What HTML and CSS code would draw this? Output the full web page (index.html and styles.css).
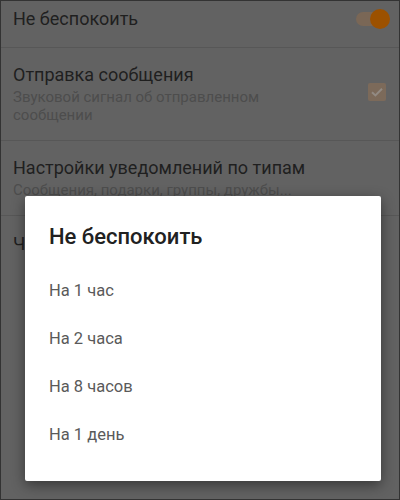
FILE: index.html
```html
<!DOCTYPE html>
<html lang="ru">
<head>
<meta charset="utf-8">
<title>Не беспокоить</title>
<link rel="stylesheet" href="styles.css">
</head>
<body>
<div class="screen">
  <div class="list">
    <div class="row row-first">
      <div class="text">
        <div class="title">Не беспокоить</div>
      </div>
      <div class="switch">
        <span class="track"></span>
        <span class="thumb"></span>
      </div>
    </div>
    <div class="row">
      <div class="text">
        <div class="title">Отправка сообщения</div>
        <div class="sub">Звуковой сигнал об отправленном сообщении</div>
      </div>
      <div class="checkbox">
        <svg width="18" height="18" viewBox="0 0 18 18"><path d="M4 9.2 L7.4 12.4 L14 5.8" fill="none" stroke="#928a83" stroke-width="2"/></svg>
      </div>
    </div>
    <div class="row">
      <div class="text">
        <div class="title">Настройки уведомлений по типам</div>
        <div class="sub">Сообщения, подарки, группы, дружбы...</div>
      </div>
    </div>
    <div class="row row-last">
      <div class="text">
        <div class="title">Частота</div>
      </div>
    </div>
  </div>

  <div class="dialog">
    <div class="dialog-title">Не беспокоить</div>
    <div class="option">На 1 час</div>
    <div class="option">На 2 часа</div>
    <div class="option">На 8 часов</div>
    <div class="option">На 1 день</div>
  </div>
</div>
</body>
</html>
```
FILE: styles.css
```css
html, body {
  margin: 0;
  padding: 0;
}
body {
  font-family: Roboto, "Noto Sans", "DejaVu Sans", sans-serif;
  background: #616161;
}
.screen {
  position: relative;
  width: 400px;
  height: 500px;
  box-sizing: border-box;
  border: 1px solid #333333;
  background: #626262;
  overflow: hidden;
}
.list {
  display: flex;
  flex-direction: column;
}
.row {
  display: flex;
  align-items: center;
  padding: 17px 13px 16px 12px;
  border-bottom: 1px solid #575757;
}
.row-first {
  padding-top: 8px;
  padding-bottom: 18px;
}
.row-last {
  border-bottom: none;
  padding-top: 18px;
}
.text {
  flex: 1;
  min-width: 0;
}
.title {
  font-size: 18px;
  line-height: 20px;
  color: #1f1f1f;
  white-space: nowrap;
}
.sub {
  margin-top: 3px;
  font-size: 15px;
  line-height: 18px;
  color: #4d4d4d;
  max-width: 280px;
}
.switch {
  position: relative;
  width: 34px;
  height: 20px;
  margin-right: -4px;
}
.track {
  position: absolute;
  left: 0;
  top: 3px;
  width: 34px;
  height: 14px;
  border-radius: 7px;
  background: #7a6756;
}
.thumb {
  position: absolute;
  right: 0;
  top: 0;
  width: 20px;
  height: 20px;
  border-radius: 50%;
  background: #9c5100;
}
.checkbox {
  width: 18px;
  height: 18px;
  border-radius: 2px;
  background: #7c6a5a;
  margin-top: -6px;
}
.checkbox svg {
  display: block;
}
.dialog {
  position: absolute;
  left: 24px;
  top: 195px;
  width: 356px;
  height: 285px;
  box-sizing: border-box;
  background: #ffffff;
  border-radius: 2px;
  box-shadow: 0 4px 14px rgba(0, 0, 0, 0.45);
  padding: 27px 24px 22px 24px;
  display: flex;
  flex-direction: column;
}
.dialog-title {
  font-size: 22px;
  line-height: 28px;
  font-weight: 500;
  color: #212121;
  margin-bottom: 16px;
}
.option {
  font-size: 16.5px;
  line-height: 48px;
  height: 48px;
  color: #5a5a5a;
}
```
